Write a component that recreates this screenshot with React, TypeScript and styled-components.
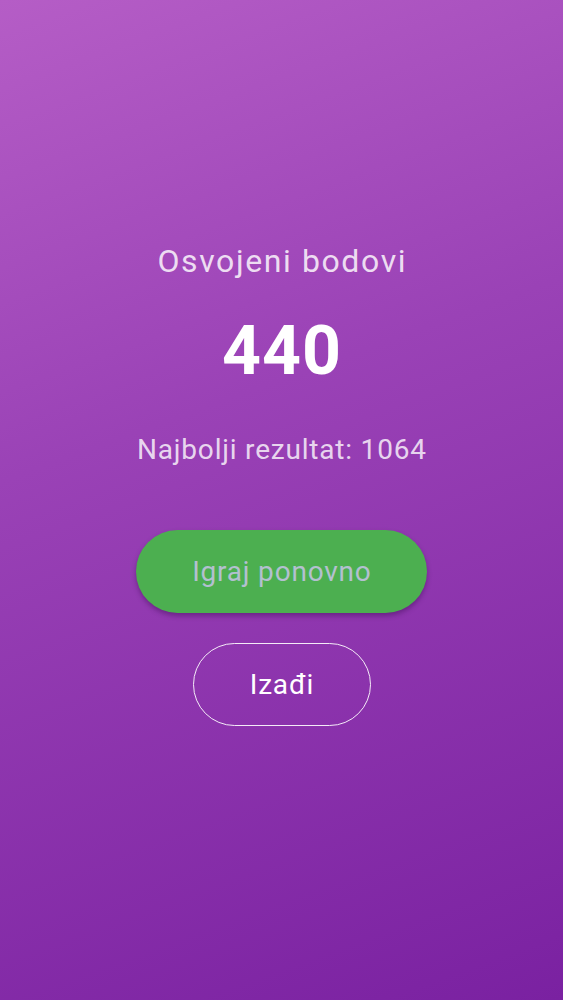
import React from "react";
import styled, { createGlobalStyle } from "styled-components";

const GlobalStyle = createGlobalStyle`
  html, body {
    margin: 0;
    padding: 0;
  }
  body {
    font-family: Roboto, "Noto Sans", sans-serif;
  }
`;

const Screen = styled.div`
  width: 563px;
  height: 1000px;
  box-sizing: border-box;
  background: linear-gradient(160deg, #b55dc6 0%, #9a42b6 40%, #7a21a1 100%);
  display: flex;
  flex-direction: column;
  align-items: center;
  padding-top: 241px;
`;

// letter-spacing leaves a trailing gap, so pad the left the same amount to stay centred
const Label = styled.div`
  font-size: 32px;
  color: rgba(255, 255, 255, 0.82);
  letter-spacing: 1.6px;
  padding-left: 1.6px;
  line-height: 40px;
`;

const Score = styled.div`
  margin-top: 30px;
  font-size: 68px;
  font-weight: 700;
  color: #ffffff;
  letter-spacing: 1px;
  padding-left: 1px;
  line-height: 80px;
`;

const Best = styled.div`
  margin-top: 41px;
  font-size: 28px;
  color: rgba(255, 255, 255, 0.8);
  letter-spacing: 0.8px;
  padding-left: 0.8px;
  line-height: 36px;
`;

const Button = styled.button<{ $primary?: boolean }>`
  font-family: Roboto, "Noto Sans", sans-serif;
  font-size: 28px;
  letter-spacing: 0.8px;
  padding: 0 0 0 0.8px;
  height: 83px;
  border-radius: 42px;
  cursor: pointer;
  box-sizing: border-box;
  ${({ $primary }) =>
    $primary
      ? `
    width: 291px;
    margin-top: 62px;
    background: #4caf50;
    color: #b3c0d0;
    border: none;
    box-shadow: 0 3px 5px rgba(40, 0, 60, 0.35);
  `
      : `
    width: 178px;
    margin-top: 30px;
    background: transparent;
    color: #ffffff;
    border: 1.5px solid rgba(255, 255, 255, 0.9);
  `}
`;

export default function App() {
  return (
    <>
      <GlobalStyle />
      <Screen>
        <Label>Osvojeni bodovi</Label>
        <Score>440</Score>
        <Best>Najbolji rezultat: 1064</Best>
        <Button $primary>Igraj ponovno</Button>
        <Button>Izađi</Button>
      </Screen>
    </>
  );
}
